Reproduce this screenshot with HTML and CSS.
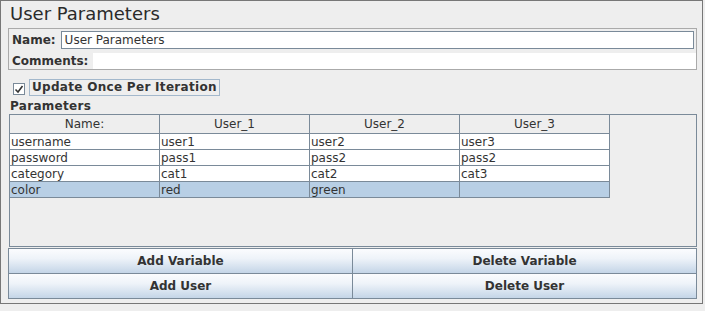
FILE: index.html
```html
<!DOCTYPE html>
<html lang="en">
<head>
  <meta charset="UTF-8" />
  <title>User Parameters</title>
  <link rel="stylesheet" href="styles.css">
</head>
<body>
  <div class="frame">
    <div class="title">User Parameters</div>

    <div class="name-panel">
      <div class="row">
        <label class="lbl">Name:</label>
        <div class="field">User Parameters</div>
      </div>
      <div class="row comments">
        <label class="lbl">Comments:</label>
        <div class="area"></div>
      </div>
    </div>

    <div class="check-row">
      <span class="checkbox">
        <svg width="10" height="10" viewBox="0 0 10 10"><path d="M1.5 5.5 L4 8 L8.5 2" fill="none" stroke="#333" stroke-width="1.6"/></svg>
      </span>
      <span class="check-label">Update Once Per Iteration</span>
    </div>

    <div class="section">Parameters</div>

    <div class="scroll">
      <table class="grid">
        <thead>
          <tr><th>Name:</th><th>User_1</th><th>User_2</th><th>User_3</th></tr>
        </thead>
        <tbody>
          <tr><td>username</td><td>user1</td><td>user2</td><td>user3</td></tr>
          <tr><td>password</td><td>pass1</td><td>pass2</td><td>pass2</td></tr>
          <tr><td>category</td><td>cat1</td><td>cat2</td><td>cat3</td></tr>
          <tr class="selected"><td>color</td><td>red</td><td>green</td><td></td></tr>
        </tbody>
      </table>
    </div>

    <div class="buttons">
      <button>Add Variable</button>
      <button>Delete Variable</button>
      <button>Add User</button>
      <button>Delete User</button>
    </div>
  </div>
</body>
</html>
```

FILE: styles.css
```css
* {
  box-sizing: border-box;
}
body {
  margin: 0;
  background: #eeeeee;
  font-family: 'DejaVu Sans', sans-serif;
  font-size: 12px;
  color: #333333;
}
.frame {
  width: 703px;
  height: 304px;
  border: 1px solid #777777;
  padding: 0 5px 0 7px;
  display: flex;
  flex-direction: column;
}
.title {
  font-size: 18px;
  line-height: 22px;
  padding: 2px 0 0 2px;
  height: 27px;
  color: #2a2a2a;
}
.name-panel {
  border: 1px solid #aaaaaa;
  height: 42px;
  padding: 1px 1px 0 3px;
}
.row {
  display: flex;
  align-items: center;
  height: 19px;
}
.lbl {
  font-weight: bold;
  margin-right: 5px;
}
.field {
  flex: 1;
  height: 18px;
  border: 1px solid #7a8a99;
  background: #fff;
  padding-left: 3px;
  line-height: 16px;
  margin-right: 1px;
}
.comments {
  margin-top: 4px;
  height: 16px;
}
.area {
  flex: 1;
  height: 16px;
  background: #fff;
  margin-right: -1px;
}
.check-row {
  display: flex;
  align-items: center;
  margin: 9px 0 0 5px;
  height: 17px;
}
.checkbox {
  width: 12px;
  height: 12px;
  border: 1px solid #7a8a99;
  background: #fff;
  display: flex;
  align-items: center;
  justify-content: center;
  margin: 2px 4px 0 0;
}
.check-label {
  font-weight: bold;
  font-size: 12px;
  letter-spacing: 0.3px;
  border: 1px solid #a3b8cc;
  padding: 0 2px;
  line-height: 15px;
}
.section {
  font-weight: bold;
  font-size: 12px;
  letter-spacing: 0.3px;
  line-height: 16px;
  margin: 2px 0 0 2px;
  height: 16px;
}
.scroll {
  margin-left: 1px;
  height: 133px;
  border: 1px solid #7a8a99;
}
.grid {
  border-collapse: collapse;
  table-layout: fixed;
  width: 601px;
  margin: -1px 0 0 -1px;
}
.grid th, .grid td {
  border: 1px solid #7a8a99;
  width: 150px;
  padding: 0 1px;
  white-space: nowrap;
  overflow: hidden;
}
.grid th {
  font-weight: normal;
  height: 19px;
  background: #eeeeee;
  text-align: center;
}
.grid td {
  height: 16px;
  line-height: 14px;
  background: #fff;
}
.grid .selected td {
  background: #b8cfe5;
}
.buttons {
  margin: 1px 0 0 1px;
  display: grid;
  grid-template-columns: 344px 344px;
  grid-template-rows: 25px 25px;
}
.buttons button {
  font-family: 'DejaVu Sans', sans-serif;
  font-weight: bold;
  font-size: 12px;
  color: #333;
  border: 1px solid #7a8a99;
  background: linear-gradient(to bottom, #fbfcfe 0%, #eef3f9 40%, #c4d5e7 100%);
  padding: 0;
  margin: 0 0 -1px -1px;
}
```
